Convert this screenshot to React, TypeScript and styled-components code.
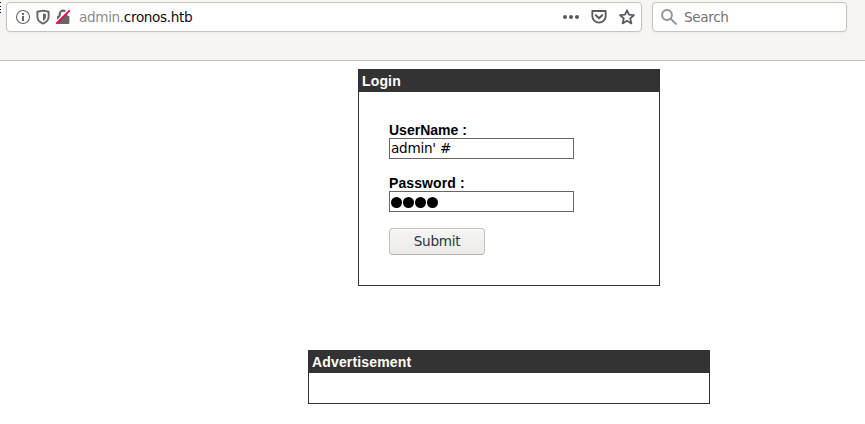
import React, { useState } from "react";
import styled, { createGlobalStyle } from "styled-components";

const GlobalStyle = createGlobalStyle`
  * { box-sizing: border-box; }
  body {
    margin: 0;
    background: #fff;
    overflow: hidden;
    font-family: "Liberation Sans", Arial, sans-serif;
    font-size: 14px;
  }
`;

const Toolbar = styled.header`
  display: flex;
  align-items: flex-start;
  height: 61px;
  padding-top: 2px;
  background: #f6f5f4;
  border-bottom: 1px solid #c8c2bc;
  font-family: "DejaVu Sans", sans-serif;
  font-size: 13.6px;
  letter-spacing: -0.35px;
`;

const MenuEdge = styled.svg`
  width: 6px;
  height: 14px;
  flex: none;
`;

const Field = styled.div<{ $width: number }>`
  display: flex;
  align-items: center;
  width: ${(p) => p.$width}px;
  height: 30px;
  flex: none;
  background: #fff;
  border: 1px solid #c9c2bb;
  border-radius: 4px;
  box-shadow: 0 1px 3px rgba(0, 0, 0, 0.05);
`;

const UrlField = styled(Field)`
  padding: 0 6px 0 8px;
  margin-right: 10px;
`;

const SearchField = styled(Field)`
  padding-left: 8px;
  color: #737373;
`;

const IconGroup = styled.div<{ $gap: number }>`
  display: flex;
  align-items: center;
  gap: ${(p) => p.$gap}px;
`;

const Icon = styled.svg`
  display: block;
  width: 16px;
  height: 16px;
  flex: none;
`;

const Address = styled.div`
  flex: 1;
  margin-left: 8px;
  color: #0c0c0d;
`;

const Subdomain = styled.span`
  color: #8a8a8b;
`;

const SearchText = styled.span`
  margin-left: 7px;
`;

const Content = styled.main`
  display: flex;
  flex-direction: column;
  align-items: center;
  gap: 64px;
  width: 402px;
  margin: 8px 0 0 308px;
`;

const Panel = styled.section<{ $width: number; $height: number }>`
  width: ${(p) => p.$width}px;
  height: ${(p) => p.$height}px;
  border: 1px solid #333;
`;

const PanelTitle = styled.div`
  height: 22px;
  padding: 3px;
  background: #333;
  color: #fff;
  font-weight: bold;
  line-height: 16px;
  letter-spacing: 0.15px;
`;

const LoginForm = styled.form`
  display: flex;
  flex-direction: column;
  align-items: flex-start;
  padding: 30px;
`;

const Label = styled.label`
  height: 16px;
  line-height: 16px;
  font-weight: bold;
  color: #000;
`;

const PasswordLabel = styled(Label)`
  letter-spacing: 0.1px;
`;

const TextInput = styled.input`
  width: 185px;
  height: 21px;
  margin: 0 0 16px;
  padding: 0 1px 2px;
  border: 1px solid #666;
  border-radius: 0;
  outline: none;
  background: #fff;
  color: #000;
  font-family: "DejaVu Sans", sans-serif;
  font-size: 13.6px;
  letter-spacing: -0.25px;
`;

const PasswordBox = styled.div`
  display: flex;
  align-items: center;
  width: 185px;
  height: 21px;
  margin-bottom: 16px;
  padding: 2px 1px 0 0.5px;
  border: 1px solid #666;
`;

const Dot = styled.span`
  width: 11px;
  height: 11px;
  margin: 0 0.5px;
  border-radius: 50%;
  background: #000;
`;

const SubmitButton = styled.button`
  width: 96px;
  height: 27px;
  padding: 0 0 2px;
  border: 1px solid #c4beb8;
  border-bottom-color: #b9b2ab;
  border-radius: 4px;
  background: linear-gradient(#f6f5f4, #edebe9);
  box-shadow: inset 0 1px #fff;
  color: #2e3436;
  font-family: "DejaVu Sans", sans-serif;
  font-size: 13.6px;
  letter-spacing: -0.3px;
`;

const InfoIcon = () => (
  <Icon viewBox="0 0 16 16">
    <circle cx="8" cy="8" r="6.5" fill="none" stroke="#666" strokeWidth="1.1" />
    <path d="M7 7h2v5H7zM7 4h2v2H7z" fill="#666" />
  </Icon>
);

const ShieldIcon = () => (
  <Icon viewBox="0 0 16 16">
    <path d="M8 1.6 13.6 2.7v4.9c0 3.5-2.5 5.9-5.6 7-3.1-1.1-5.6-3.5-5.6-7V2.7z" fill="none" stroke="#666" strokeWidth="1.9" strokeLinejoin="round" />
    <path d="M8 4.5 10.9 5v3c0 1.8-1.2 3.1-2.9 3.9z" fill="#666" />
  </Icon>
);

const InsecureIcon = () => (
  <Icon viewBox="0 0 16 16">
    <path d="M4.7 7V5a3.3 3.3 0 0 1 6.6 0v2" fill="none" stroke="#666" strokeWidth="2.2" />
    <rect x="2" y="6.8" width="12.4" height="8.2" rx="1" fill="#666" />
    <path d="M1 13.5 13.5 1" stroke="#fff" strokeWidth="2.4" />
    <path d="M1.8 14.2 14.2 1.8" stroke="#ff0048" strokeWidth="1.8" strokeLinecap="round" />
  </Icon>
);

const MoreIcon = () => (
  <Icon viewBox="0 0 16 16" fill="#5a5a5b">
    <circle cx="2" cy="8" r="2" />
    <circle cx="8" cy="8" r="2" />
    <circle cx="14" cy="8" r="2" />
  </Icon>
);

const PocketIcon = () => (
  <Icon viewBox="0 0 16 16" fill="none" stroke="#5a5a5b" strokeWidth="2" strokeLinecap="round" strokeLinejoin="round">
    <path d="M1.3 2h13.4v5a6.7 6.7 0 0 1-13.4 0z" strokeWidth="1.8" />
    <path d="m4.8 6.3 3.2 3 3.2-3" />
  </Icon>
);

const StarIcon = () => (
  <Icon viewBox="0 0 16 16" fill="none" stroke="#5a5a5b" strokeWidth="1.8" strokeLinejoin="round">
    <path d="m8 1.3 2 4.4 4.9.5-3.7 3.2 1.2 5L8 11.8l-4.4 2.6 1.2-5L1.1 6.2 6 5.7z" />
  </Icon>
);

const SearchIcon = () => (
  <Icon viewBox="0 0 16 16" fill="none" stroke="#939393" strokeWidth="2">
    <circle cx="6" cy="6" r="4.9" />
    <path d="m9.6 9.6 5.3 5.3" strokeLinecap="round" />
  </Icon>
);

export default function App() {
  const [user, setUser] = useState("admin' #");
  return (
    <>
      <GlobalStyle />
      <Toolbar>
        <MenuEdge viewBox="0 0 6 14">
          <path d="M0 .5h1M0 4.5h1M0 7.5h1M0 10.5h1" stroke="#111" />
        </MenuEdge>
        <UrlField $width={636}>
          <IconGroup $gap={4}>
            <InfoIcon />
            <ShieldIcon />
            <InsecureIcon />
          </IconGroup>
          <Address>
            <Subdomain>admin.</Subdomain>cronos.htb
          </Address>
          <IconGroup $gap={12}>
            <MoreIcon />
            <PocketIcon />
            <StarIcon />
          </IconGroup>
        </UrlField>
        <SearchField $width={195}>
          <SearchIcon />
          <SearchText>Search</SearchText>
        </SearchField>
      </Toolbar>
      <Content>
        <Panel $width={302} $height={217}>
          <PanelTitle>Login</PanelTitle>
          <LoginForm onSubmit={(e) => e.preventDefault()}>
            <Label htmlFor="user">UserName :</Label>
            <TextInput id="user" value={user} spellCheck={false} onChange={(e) => setUser(e.target.value)} />
            <PasswordLabel>Password :</PasswordLabel>
            <PasswordBox>
              <Dot />
              <Dot />
              <Dot />
              <Dot />
            </PasswordBox>
            <SubmitButton type="submit">Submit</SubmitButton>
          </LoginForm>
        </Panel>
        <Panel $width={402} $height={54}>
          <PanelTitle>Advertisement</PanelTitle>
        </Panel>
      </Content>
    </>
  );
}
